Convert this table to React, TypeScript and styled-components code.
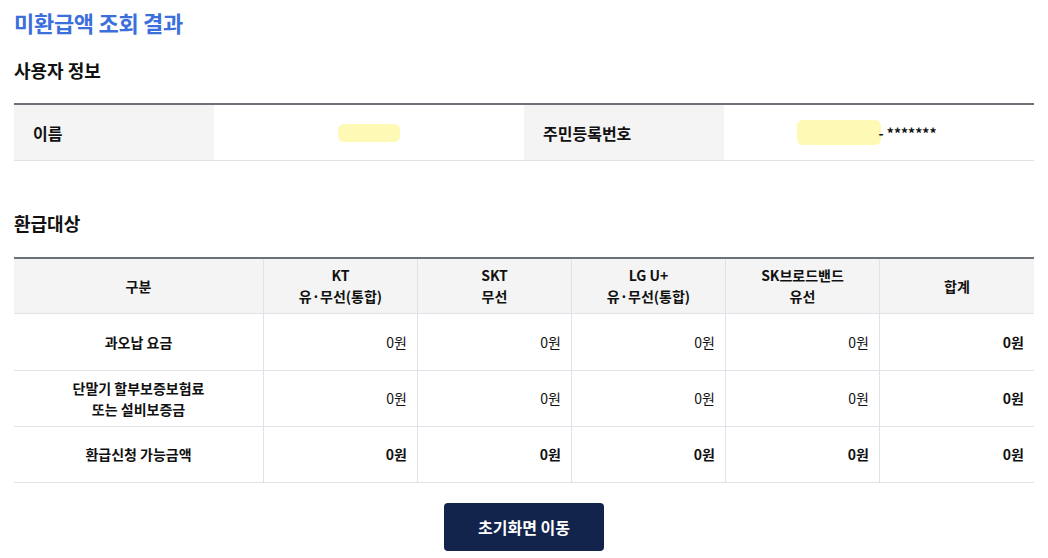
import React from "react";
import styled, { createGlobalStyle } from "styled-components";

const Global = createGlobalStyle`
  html, body { margin: 0; padding: 0; background: #fff; }
  body { font-family: "Noto Sans CJK KR", "Noto Sans", sans-serif; color: #111; }
`;

const Page = styled.div`
  padding: 5px 14px 0 14px;
  display: flex;
  flex-direction: column;
`;

const Title = styled.h1`
  margin: 0;
  font-size: 22px;
  font-weight: 700;
  color: #3a6fdc;
  line-height: 34px;
  letter-spacing: -0.3px;
`;

const SectionTitle = styled.h2<{ $top: number }>`
  margin: ${(p) => p.$top}px 0 0 0;
  font-size: 18px;
  font-weight: 700;
  line-height: 26px;
  color: #111;
`;

const InfoTable = styled.div`
  margin-top: 20px;
  border-top: 2px solid #6c7178;
  border-bottom: 1px solid #e2e2e2;
  display: grid;
  grid-template-columns: 200px 310px 200px 310px;
  height: 55px;
`;

const InfoLabel = styled.div`
  background: #f4f4f4;
  display: flex;
  align-items: center;
  padding-left: 19px;
  font-size: 16px;
  font-weight: 700;
`;

const InfoValue = styled.div<{ $shift?: number }>`
  display: flex;
  align-items: center;
  justify-content: center;
  padding-right: ${(p) => p.$shift ?? 0}px;
  font-size: 14px;
  font-weight: 700;
`;

const Mask = styled.span<{ $w: number; $h: number }>`
  display: inline-block;
  width: ${(p) => p.$w}px;
  height: ${(p) => p.$h}px;
  background: #fff9b6;
  border-radius: 6px;
`;

const Masked = styled.span`
  margin-left: -3px;
`;

const Grid = styled.div`
  margin-top: 21px;
  border-top: 2px solid #6c7178;
  display: grid;
  grid-template-columns: 250px repeat(5, 154px);
`;

const Cell = styled.div<{ $head?: boolean; $align?: "center" | "right"; $bold?: boolean; $h: number; $last?: boolean }>`
  height: ${(p) => p.$h}px;
  box-sizing: border-box;
  border-bottom: 1px solid #dfe3e9;
  border-right: ${(p) => (p.$last ? "none" : "1px solid #dfe3e9")};
  background: ${(p) => (p.$head ? "#f4f4f4" : "#fff")};
  display: flex;
  align-items: center;
  justify-content: ${(p) => (p.$align === "right" ? "flex-end" : "center")};
  text-align: center;
  padding-right: ${(p) => (p.$align === "right" ? "10px" : "0")};
  font-size: 14px;
  line-height: 21px;
  font-weight: ${(p) => (p.$bold ? 700 : 400)};
  color: #111;
`;

const ButtonRow = styled.div`
  display: flex;
  justify-content: center;
  margin-top: 20px;
`;

const Button = styled.button`
  width: 160px;
  height: 48px;
  background: #12244b;
  color: #fff;
  border: none;
  border-radius: 4px;
  font-family: inherit;
  font-size: 16px;
  font-weight: 700;
`;

const headers = ["구분", "KT\n유·무선(통합)", "SKT\n무선", "LG U+\n유·무선(통합)", "SK브로드밴드\n유선", "합계"];
const rows: { label: string; h: number; bold: boolean }[] = [
  { label: "과오납 요금", h: 57, bold: false },
  { label: "단말기 할부보증보험료\n또는 설비보증금", h: 56, bold: false },
  { label: "환급신청 가능금액", h: 56, bold: true },
];

const Lines = ({ text }: { text: string }) => (
  <div>
    {text.split("\n").map((t, i) => (
      <div key={i}>{t}</div>
    ))}
  </div>
);

export default function App() {
  return (
    <>
      <Global />
      <Page>
        <Title>미환급액 조회 결과</Title>
        <SectionTitle $top={18}>사용자 정보</SectionTitle>
        <InfoTable>
          <InfoLabel>이름</InfoLabel>
          <InfoValue>
            <Mask $w={62} $h={18} />
          </InfoValue>
          <InfoLabel>주민등록번호</InfoLabel>
          <InfoValue $shift={24}>
            <Mask $w={84} $h={25} />
            <Masked>- *******</Masked>
          </InfoValue>
        </InfoTable>
        <SectionTitle $top={49}>환급대상</SectionTitle>
        <Grid>
          {headers.map((h, i) => (
            <Cell key={h} $head $bold $h={55} $last={i === headers.length - 1}>
              <Lines text={h} />
            </Cell>
          ))}
          {rows.map((r) => (
            <React.Fragment key={r.label}>
              <Cell $bold $h={r.h}>
                <Lines text={r.label} />
              </Cell>
              {[0, 1, 2, 3, 4].map((c) => (
                <Cell key={c} $align="right" $bold={r.bold || c === 4} $h={r.h} $last={c === 4}>
                  0원
                </Cell>
              ))}
            </React.Fragment>
          ))}
        </Grid>
        <ButtonRow>
          <Button>초기화면 이동</Button>
        </ButtonRow>
      </Page>
    </>
  );
}
